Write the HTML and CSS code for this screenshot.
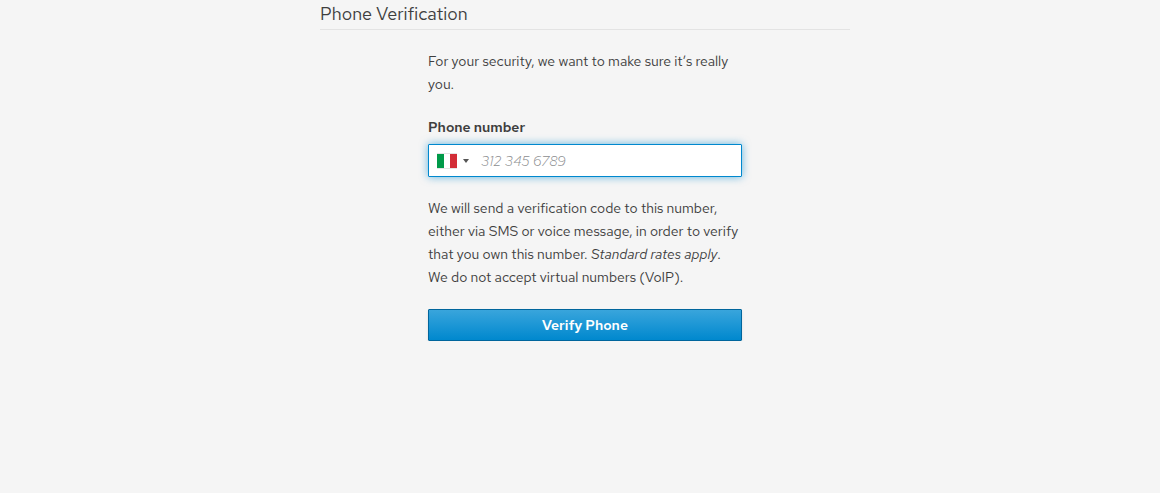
FILE: index.html
```html
<!DOCTYPE html>
<html lang="en">
<head>
<meta charset="utf-8">
<title>Phone Verification</title>
<link rel="stylesheet" href="styles.css">
</head>
<body>
<main class="page">
  <h1 class="title">Phone Verification</h1>
  <form class="form">
    <p class="text">For your security, we want to make sure it’s really you.</p>
    <label class="label" for="phone">Phone number</label>
    <div class="phone">
      <button class="country" type="button" aria-label="Italy, change country">
        <svg class="flag" viewBox="0 0 22 16" aria-hidden="true">
          <path fill="#e4e4e4" d="M1 0h20v16H1z"/>
          <path fill="#fff" d="M8 1h6v14H8z"/>
          <path fill="#009a49" d="M1 1h7v14H1z"/>
          <path fill="#d22d37" d="M14 1h7v14h-7z"/>
        </svg>
        <span class="arrow"></span>
      </button>
      <input class="number" id="phone" type="tel" placeholder="312 345 6789">
    </div>
    <p class="text">We will send a verification code to this number, either via SMS or voice message, in order to verify that you own this number. <em>Standard rates apply</em>.<br>We do not accept virtual numbers (VoIP).</p>
    <button class="submit" type="submit">Verify Phone</button>
  </form>
</main>
</body>
</html>
```
FILE: styles.css
```css
* { box-sizing: border-box; }
body {
  margin: 0;
  padding-left: 10px;
  background: #f5f5f5;
  color: #3e3e3e;
  font: 14px/23px "Red Hat Text", Roboto, sans-serif;
}
.page { max-width: 530px; margin: 0 auto; }
.title {
  margin: 0 0 20px;
  padding-bottom: 1px;
  border-bottom: 1px solid #e3e3e3;
  font-size: 18px;
  line-height: 28px;
  font-weight: 400;
}
.form { max-width: 314px; margin: 0 auto; }
.text { margin: 0 0 20px; }
.label { display: block; margin-bottom: 5px; font-weight: 600; }
.phone {
  display: flex;
  height: 33px;
  margin-bottom: 20px;
  background: #fff;
  border: 1px solid #0088ce;
  border-radius: 1px;
  box-shadow: 0 0 8px rgba(0, 136, 206, 0.6);
}
.country {
  display: flex;
  align-items: center;
  gap: 5px;
  padding: 0 6px 0 7px;
  border: 0;
  background: none;
}
.flag { width: 22px; height: 16px; }
.arrow {
  border: 3px solid transparent;
  border-top: 4px solid #555;
  border-bottom: 0;
}
.number {
  flex: 1;
  min-width: 0;
  padding: 2px 6px 0;
  border: 0;
  outline: 0;
  background: none;
  font: inherit;
  color: inherit;
}
.number::placeholder {
  color: #8b8d8f;
  font-style: italic;
  font-weight: 300;
  opacity: 1;
}
.submit {
  display: block;
  width: 100%;
  height: 32px;
  padding: 0;
  border: 1px solid #00659c;
  border-radius: 1px;
  background: linear-gradient(#39a5dc, #0088ce);
  box-shadow: 0 2px 3px rgba(3, 3, 3, 0.1);
  color: #fff;
  font: inherit;
  font-weight: 600;
}
```
